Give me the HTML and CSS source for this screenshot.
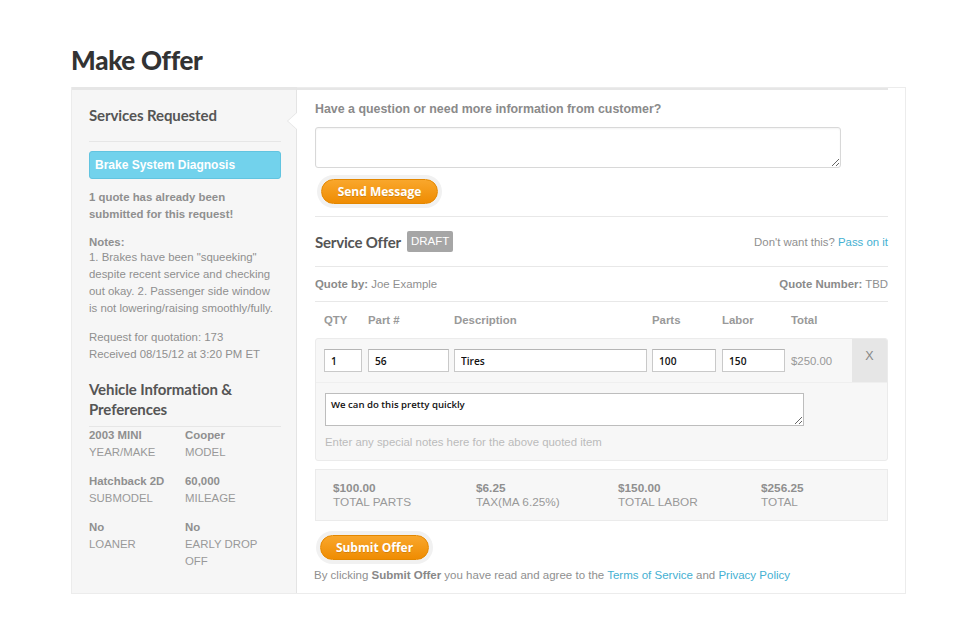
FILE: index.html
```html
<!DOCTYPE html>
<html>
<head>
<meta charset="utf-8">
<title>Make Offer</title>
<link rel="stylesheet" href="styles.css">
</head>
<body>
<div class="page">
  <h1 class="title">Make Offer</h1>
  <div class="panel">
    <aside class="sidebar">
      <h2 class="side-head first">Services Requested</h2>
      <div class="service-tag">Brake System Diagnosis</div>
      <p class="side-text strong">1 quote has already been submitted for this request!</p>
      <div class="notes">
        <div class="notes-label">Notes:</div>
        <p class="side-text">1. Brakes have been "squeeking" despite recent service and checking out okay. 2. Passenger side window is not lowering/raising smoothly/fully.</p>
      </div>
      <p class="side-text request">Request for quotation: 173<br>Received 08/15/12 at 3:20 PM ET</p>
      <h2 class="side-head vehicle">Vehicle Information &amp; Preferences</h2>
      <div class="specs">
        <div class="spec"><div class="spec-val">2003 MINI</div><div class="spec-lbl">YEAR/MAKE</div></div>
        <div class="spec"><div class="spec-val">Cooper</div><div class="spec-lbl">MODEL</div></div>
        <div class="spec"><div class="spec-val">Hatchback 2D</div><div class="spec-lbl">SUBMODEL</div></div>
        <div class="spec"><div class="spec-val">60,000</div><div class="spec-lbl">MILEAGE</div></div>
        <div class="spec"><div class="spec-val">No</div><div class="spec-lbl">LOANER</div></div>
        <div class="spec"><div class="spec-val">No</div><div class="spec-lbl">EARLY DROP OFF</div></div>
      </div>
    </aside>
    <main class="main">
      <div class="main-inner">
        <section class="ask">
          <h3 class="ask-head">Have a question or need more information from customer?</h3>
          <textarea class="ask-box"></textarea>
          <button class="btn send">Send Message</button>
        </section>
        <div class="offer-row">
          <div class="offer-left"><span class="offer-title">Service Offer</span><span class="badge">DRAFT</span></div>
          <div class="meta">Don't want this? <a class="link" href="#">Pass on it</a></div>
        </div>
        <div class="quote-row">
          <div class="meta"><b>Quote by:</b> Joe Example</div>
          <div class="meta"><b>Quote Number:</b> TBD</div>
        </div>
        <div class="grid head-row">
          <div>QTY</div><div>Part #</div><div>Description</div><div>Parts</div><div>Labor</div><div>Total</div><div></div>
        </div>
        <div class="item">
          <div class="grid item-row">
            <div><input class="field w-qty" value="1"></div>
            <div><input class="field w-part" value="56"></div>
            <div><input class="field w-desc" value="Tires"></div>
            <div><input class="field w-parts" value="100"></div>
            <div><input class="field w-labor" value="150"></div>
            <div class="line-total">$250.00</div>
            <div class="remove">X</div>
          </div>
          <div class="item-notes">
            <textarea class="note-box">We can do this pretty quickly</textarea>
            <div class="note-hint">Enter any special notes here for the above quoted item</div>
          </div>
        </div>
        <div class="totals">
          <div class="tot"><div class="tot-val">$100.00</div><div class="tot-lbl">TOTAL PARTS</div></div>
          <div class="tot"><div class="tot-val">$6.25</div><div class="tot-lbl">TAX(MA 6.25%)</div></div>
          <div class="tot"><div class="tot-val">$150.00</div><div class="tot-lbl">TOTAL LABOR</div></div>
          <div class="tot"><div class="tot-val">$256.25</div><div class="tot-lbl">TOTAL</div></div>
        </div>
        <button class="btn submit">Submit Offer</button>
        <p class="terms">By clicking <b>Submit Offer</b> you have read and agree to the <a class="link" href="#">Terms of Service</a> and <a class="link" href="#">Privacy Policy</a></p>
      </div>
    </main>
  </div>
</div>
</body>
</html>
```

FILE: styles.css
```css
* { box-sizing: border-box; }
html, body { margin: 0; padding: 0; background: #fff; }
body {
  font-family: "Liberation Sans", Arial, sans-serif;
  font-size: 11.4px;
  color: #888;
}
.page { padding: 44px 0 0 71px; width: 906px; }
.title {
  margin: 0 0 10px 0;
  font-family: Lato, "Liberation Sans", sans-serif;
  font-weight: 900;
  font-size: 26px;
  height: 33px;
  letter-spacing: -0.3px;
  color: #333;
}
.panel {
  display: flex;
  border: 1px solid #ececec;
  border-top: none;
  width: 835px;
  height: 507px;
}
.sidebar {
  width: 225px;
  flex: none;
  background: #f6f6f6;
  border-top: 3px solid #e6e6e6;
  border-right: 1px solid #e4e4e4;
  padding: 0 15px 0 17px;
}
.side-head {
  margin: 0;
  font-family: Lato, "Liberation Sans", sans-serif;
  font-weight: 700;
  font-size: 15px;
  line-height: 20px;
  color: #555;
  letter-spacing: -0.1px;
}
.side-head.first { padding: 15px 0 16px; border-bottom: 1px solid #e6e6e6; }
.service-tag {
  margin-top: 9px;
  height: 28px;
  line-height: 26px;
  padding-left: 5px;
  background: #72d2ec;
  border: 1px solid #62c4e0;
  border-radius: 3px;
  color: #fff;
  font-weight: bold;
  font-size: 12px;
}
.side-text { margin: 0; line-height: 17px; font-size: 11.4px; color: #8f8f8f; }
.side-text.strong { margin-top: 10px; font-weight: bold; }
.notes { margin-top: 12px; }
.notes-label { font-weight: bold; line-height: 14px; color: #8f8f8f; }
.request { margin-top: 12px; }
.side-head.vehicle { margin-top: 16px; padding-bottom: 7px; border-bottom: 1px solid #e6e6e6; }
.specs { display: grid; grid-template-columns: 96px 1fr; row-gap: 12px; }
.spec-val { font-weight: bold; line-height: 17px; color: #8f8f8f; }
.spec-lbl { line-height: 17px; color: #999; }

.main {
  flex: 1;
  min-width: 0;
  position: relative;
  padding-right: 17px;
  border-top: 1px solid #ececec;
}
.main::before, .main::after {
  content: "";
  position: absolute;
  top: 24px;
  width: 0; height: 0;
  border-style: solid;
  border-color: transparent;
}
.main::before { left: -10px; border-width: 9px 10px 9px 0; border-right-color: #e4e4e4; }
.main::after { left: -9px; border-width: 9px 10px 9px 0; border-right-color: #fff; }
.main-inner { border-top: 2px solid #e6e6e6; padding-left: 18px; }
.ask { padding-top: 11px; border-bottom: 1px solid #e8e8e8; padding-bottom: 12px; }
.ask-head { margin: 0; font-size: 12.4px; line-height: 16px; font-weight: bold; color: #8a8a8a; }
.ask-box {
  display: block;
  margin-top: 10px;
  width: 526px;
  height: 41px;
  border: 1px solid #d8d8d8;
  border-radius: 3px;
  background: #fff;
  box-shadow: inset 0 1px 2px rgba(0,0,0,0.05);
}
.btn {
  display: block;
  height: 25px;
  border: 1px solid #e38700;
  border-radius: 13px;
  background: linear-gradient(#f9a72c, #ef8c02);
  color: #fff;
  font-family: "Open Sans", "DejaVu Sans", sans-serif;
  font-weight: 700;
  font-size: 12px;
  line-height: 22px;
  padding: 0;
  text-shadow: 0 1px 0 rgba(0,0,0,0.15);
  box-shadow: 0 0 0 4px #f1f1f1;
}
.send { margin: 11px 0 0 6px; width: 117px; }
.offer-row, .quote-row { display: flex; justify-content: space-between; align-items: center; border-bottom: 1px solid #e8e8e8; }
.offer-row { height: 50px; }
.quote-row { height: 35px; }
.offer-left { display: flex; align-items: center; }
.offer-title {
  font-family: Lato, "Liberation Sans", sans-serif;
  font-weight: 700;
  font-size: 15px;
  color: #555;
  letter-spacing: -0.2px;
}
.badge {
  margin-left: 6px;
  height: 21px;
  padding: 0 4px;
  line-height: 21px;
  background: #a6a6a6;
  border-radius: 2px;
  color: #fff;
  font-size: 11.5px;
}
.meta { font-size: 11.4px; color: #8f8f8f; }
.meta b { color: #8a8a8a; }
.link { color: #44b0d2; text-decoration: none; }
.grid { display: grid; }
.head-row {
  grid-template-columns: 9px 44px 86px 198px 70px 69px 1fr 35px;
  height: 36px; align-items: center; font-weight: bold; color: #999;
}
.head-row > div:first-child { grid-column: 2; }
.item {
  background: #f7f7f7;
  border: 1px solid #ebebeb;
  border-radius: 3px;
  height: 123px;
}
.item-row {
  grid-template-columns: 8px 44px 86px 198px 70px 69px 1fr 35px;
  height: 44px; border-bottom: 1px solid #efefef; align-items: center;
}
.item-row > div:first-child { grid-column: 2; }
.field {
  display: block;
  height: 23px;
  border: 1px solid #c9c9c9;
  border-top-color: #b5b5b5;
  background: #fff;
  padding: 0 6px;
  font-family: "Open Sans", "DejaVu Sans", sans-serif;
  font-weight: 600;
  font-size: 10.2px;
  color: #111;
}
.w-qty { width: 38px; }
.w-part { width: 81px; }
.w-desc { width: 193px; }
.w-parts { width: 64px; }
.w-labor { width: 63px; }
.line-total { color: #999; }
.remove {
  align-self: stretch;
  background: #e6e6e6;
  text-align: center;
  line-height: 34px;
  color: #888;
  font-size: 12.5px;
  border-top-right-radius: 2px;
}
.item-notes { padding: 10px 0 0 9px; }
.note-box {
  display: block;
  width: 479px;
  height: 33px;
  border: 1px solid #bdbdbd;
  background: #fff;
  padding: 4px 5px;
  font-family: "Open Sans", "DejaVu Sans", sans-serif;
  font-weight: 600;
  font-size: 9.6px;
  color: #111;
  resize: both;
}
.note-hint { margin-top: 8px; color: #bbb; font-size: 11.4px; line-height: 16px; }
.totals {
  margin-top: 8px;
  height: 52px;
  display: grid;
  grid-template-columns: 143px 142px 143px 1fr;
  align-content: center;
  padding-left: 17px;
  background: #f7f7f7;
  border: 1px solid #ebebeb;
  font-size: 11.8px;
}
.tot-val { font-weight: bold; line-height: 13px; color: #8f8f8f; }
.tot-lbl { line-height: 14px; color: #999; }
.submit { margin: 14px 0 0 5px; width: 109px; }
.terms { margin: 7px 0 0 -1px; line-height: 16px; font-size: 11.5px; color: #8f8f8f; }
.terms b { color: #888; }
```
